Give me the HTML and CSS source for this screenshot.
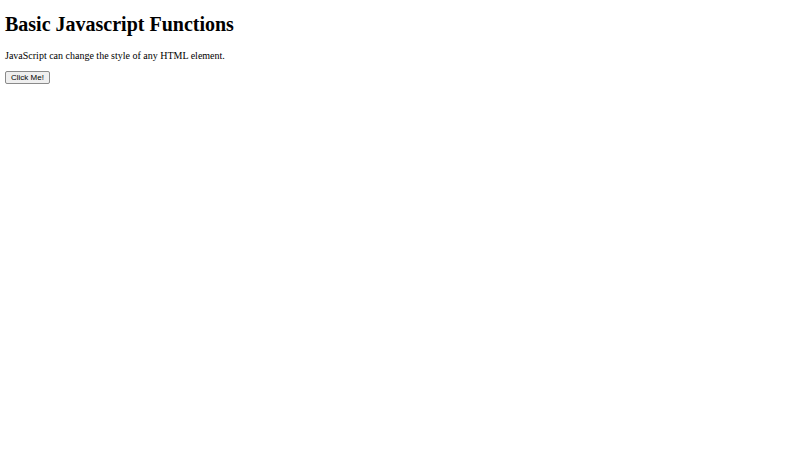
FILE: index.html
```html
<!DOCTYPE html>
<html lang="en">
<head>
<meta charset="utf-8">
<title>Basic Javascript Functions</title>
<link rel="stylesheet" href="styles.css">
</head>
<body>
<main class="page">
<h1 class="title">Basic Javascript Functions</h1>
<p class="intro">JavaScript can change the style of any HTML element.</p>
<button class="action" type="button">Click Me!</button>
</main>
</body>
</html>
```
FILE: styles.css
```css
body {
  margin: 0;
  background: #fff;
  color: #000;
  font-family: "Liberation Serif", "Times New Roman", serif;
}

.page {
  display: flex;
  flex-direction: column;
  align-items: flex-start;
  padding: 13px 5px;
}

.title {
  margin: 0 0 14px;
  font-size: 20px;
  line-height: 23px;
}

.intro {
  margin: 0 0 9px;
  font-size: 10px;
  line-height: 12px;
}

.action {
  padding: 0 5px;
  border: 1px solid #8a8a8a;
  border-radius: 2px;
  background: #efefef;
  color: #000;
  font-family: "Liberation Sans", Arial, sans-serif;
  font-size: 8px;
  line-height: 11px;
}
```
